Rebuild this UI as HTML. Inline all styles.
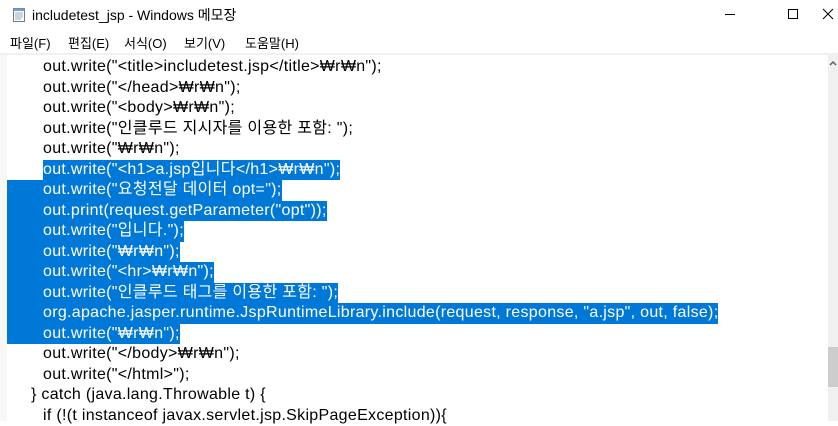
<!DOCTYPE html>
<html><head><meta charset="utf-8"><style>
*{margin:0;padding:0;box-sizing:border-box}
body{width:838px;height:421px;overflow:hidden;background:#fff;position:relative;font-family:"Liberation Sans","Noto Sans CJK KR",sans-serif;color:#000}
.title{position:absolute;left:32px;top:5px;font-size:14px}
.menu{position:absolute;top:33px;font-size:13px}
.sep{position:absolute;left:0;top:53px;width:838px;height:2px;background:#f0f0f0}
.edge{position:absolute;left:0;top:55px;width:7px;height:366px;background:#f7f7f7}
.ln{position:absolute;left:7px;height:20.5px;font-size:16px;letter-spacing:0.3px;line-height:20.5px;white-space:pre;padding-left:36px}
.s{background:#0078d7;color:#fff}
.s1{left:43px;padding-left:0}
.sb{position:absolute;left:828px;top:55px;width:10px;height:366px;background:#f0f0f0}
</style></head><body>
<svg style="position:absolute;left:11px;top:7px" width="16" height="16" viewBox="0 0 16 16"><rect x="2.5" y="1.5" width="11" height="13" fill="#fff" stroke="#6a7b8c"/><rect x="2.5" y="1.5" width="11" height="2.5" fill="#6fa0d0"/><path d="M4 6h8M4 8h8M4 10h8M4 12h6" stroke="#9ab" stroke-width="1"/></svg>
<div class="title">includetest_jsp - Windows 메모장</div>
<div class="menu" style="left:10px">파일(F)</div>
<div class="menu" style="left:68px">편집(E)</div>
<div class="menu" style="left:124px">서식(O)</div>
<div class="menu" style="left:184px">보기(V)</div>
<div class="menu" style="left:245px">도움말(H)</div>
<svg style="position:absolute;left:718px;top:7px" width="115" height="16"><path d="M7 7.5h10" stroke="#000"/><rect x="70.5" y="2.5" width="9" height="9" fill="none" stroke="#000"/><path d="M117 2l10 10M127 2l-10 10" stroke="#000" transform="translate(-12,0)"/></svg>
<div class="sep"></div>
<div class="edge"></div>
<div class="ln" style="top:57px">out.write("&lt;title&gt;includetest.jsp&lt;/title&gt;₩r₩n");</div>
<div class="ln" style="top:77.5px">out.write("&lt;/head&gt;₩r₩n");</div>
<div class="ln" style="top:98px">out.write("&lt;body&gt;₩r₩n");</div>
<div class="ln" style="top:118.5px">out.write("인클루드 지시자를 이용한 포함: ");</div>
<div class="ln" style="top:139px">out.write("₩r₩n");</div>
<div class="ln s s1" style="top:159.5px">out.write("&lt;h1&gt;a.jsp입니다&lt;/h1&gt;₩r₩n");</div>
<div class="ln s" style="top:180px">out.write("요청전달 데이터 opt=");</div>
<div class="ln s" style="top:200.5px">out.print(request.getParameter("opt"));</div>
<div class="ln s" style="top:221px">out.write("입니다.");</div>
<div class="ln s" style="top:241.5px">out.write("₩r₩n");</div>
<div class="ln s" style="top:262px">out.write("&lt;hr&gt;₩r₩n");</div>
<div class="ln s" style="top:282.5px">out.write("인클루드 태그를 이용한 포함: ");</div>
<div class="ln s" style="top:303px">org.apache.jasper.runtime.JspRuntimeLibrary.include(request, response, "a.jsp", out, false);</div>
<div class="ln s" style="top:323.5px">out.write("₩r₩n");</div>
<div class="ln" style="top:344px">out.write("&lt;/body&gt;₩r₩n");</div>
<div class="ln" style="top:364.5px">out.write("&lt;/html&gt;");</div>
<div class="ln" style="top:385px;padding-left:24px">} catch (java.lang.Throwable t) {</div>
<div class="ln" style="top:405.5px">if (!(t instanceof javax.servlet.jsp.SkipPageException)){</div>
<div class="sb"><svg style="position:absolute;left:1px;top:5px" width="8" height="6"><path d="M1 5l3-3 3 3" stroke="#606060" stroke-width="1.5" fill="none"/></svg><div style="position:absolute;left:0;top:292px;width:10px;height:40px;background:#cdcdcd"></div></div>
</body></html>
